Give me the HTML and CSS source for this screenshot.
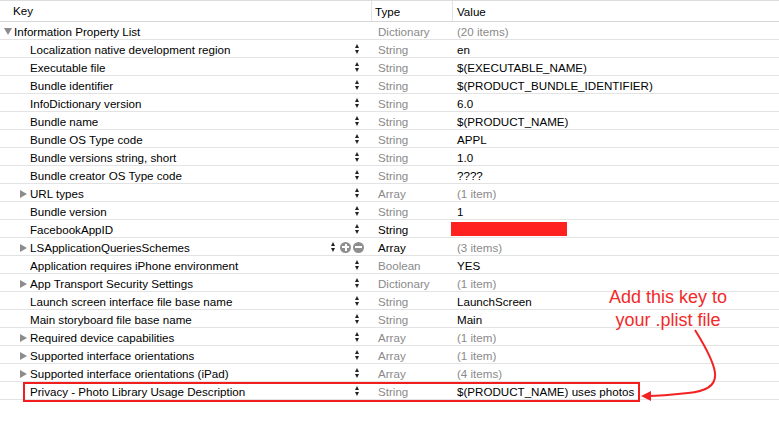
FILE: index.html
```html
<!DOCTYPE html>
<html>
<head>
<meta charset="utf-8">
<link rel="stylesheet" href="styles.css">
</head>
<body>
<div class="plist">
  <div class="row head">
    <div class="key"><span class="ktext">Key</span></div>
    <div class="type">Type</div>
    <div class="value">Value</div>
  </div>
  <div class="row">
    <div class="key root"><span class="tri down"></span><span class="ktext">Information Property List</span></div>
    <div class="type dim">Dictionary</div>
    <div class="value dim">(20 items)</div>
  </div>
  <div class="row">
    <div class="key child"><span class="ktext">Localization native development region</span><span class="step"></span></div>
    <div class="type dim">String</div><div class="value">en</div>
  </div>
  <div class="row">
    <div class="key child"><span class="ktext">Executable file</span><span class="step"></span></div>
    <div class="type dim">String</div><div class="value">$(EXECUTABLE_NAME)</div>
  </div>
  <div class="row">
    <div class="key child"><span class="ktext">Bundle identifier</span><span class="step"></span></div>
    <div class="type dim">String</div><div class="value">$(PRODUCT_BUNDLE_IDENTIFIER)</div>
  </div>
  <div class="row">
    <div class="key child"><span class="ktext">InfoDictionary version</span><span class="step"></span></div>
    <div class="type dim">String</div><div class="value">6.0</div>
  </div>
  <div class="row">
    <div class="key child"><span class="ktext">Bundle name</span><span class="step"></span></div>
    <div class="type dim">String</div><div class="value">$(PRODUCT_NAME)</div>
  </div>
  <div class="row">
    <div class="key child"><span class="ktext">Bundle OS Type code</span><span class="step"></span></div>
    <div class="type dim">String</div><div class="value">APPL</div>
  </div>
  <div class="row">
    <div class="key child"><span class="ktext">Bundle versions string, short</span><span class="step"></span></div>
    <div class="type dim">String</div><div class="value">1.0</div>
  </div>
  <div class="row">
    <div class="key child"><span class="ktext">Bundle creator OS Type code</span><span class="step"></span></div>
    <div class="type dim">String</div><div class="value">????</div>
  </div>
  <div class="row">
    <div class="key child"><span class="tri right"></span><span class="ktext">URL types</span><span class="step"></span></div>
    <div class="type dim">Array</div><div class="value dim">(1 item)</div>
  </div>
  <div class="row">
    <div class="key child"><span class="ktext">Bundle version</span><span class="step"></span></div>
    <div class="type dim">String</div><div class="value">1</div>
  </div>
  <div class="row">
    <div class="key child"><span class="ktext">FacebookAppID</span><span class="step"></span></div>
    <div class="type">String</div><div class="value"><span class="redact"></span></div>
  </div>
  <div class="row">
    <div class="key child"><span class="tri right"></span><span class="ktext">LSApplicationQueriesSchemes</span><span class="step alt"></span><span class="btn plus"></span><span class="btn minus"></span></div>
    <div class="type">Array</div><div class="value dim">(3 items)</div>
  </div>
  <div class="row">
    <div class="key child"><span class="ktext">Application requires iPhone environment</span><span class="step"></span></div>
    <div class="type dim">Boolean</div><div class="value">YES</div>
  </div>
  <div class="row">
    <div class="key child"><span class="tri right"></span><span class="ktext">App Transport Security Settings</span><span class="step"></span></div>
    <div class="type dim">Dictionary</div><div class="value dim">(1 item)</div>
  </div>
  <div class="row">
    <div class="key child"><span class="ktext">Launch screen interface file base name</span><span class="step"></span></div>
    <div class="type dim">String</div><div class="value">LaunchScreen</div>
  </div>
  <div class="row">
    <div class="key child"><span class="ktext">Main storyboard file base name</span><span class="step"></span></div>
    <div class="type dim">String</div><div class="value">Main</div>
  </div>
  <div class="row">
    <div class="key child"><span class="tri right"></span><span class="ktext">Required device capabilities</span><span class="step"></span></div>
    <div class="type dim">Array</div><div class="value dim">(1 item)</div>
  </div>
  <div class="row">
    <div class="key child"><span class="tri right"></span><span class="ktext">Supported interface orientations</span><span class="step"></span></div>
    <div class="type dim">Array</div><div class="value dim">(1 item)</div>
  </div>
  <div class="row">
    <div class="key child"><span class="tri right"></span><span class="ktext">Supported interface orientations (iPad)</span><span class="step"></span></div>
    <div class="type dim">Array</div><div class="value dim">(4 items)</div>
  </div>
  <div class="row">
    <div class="key child"><span class="ktext">Privacy - Photo Library Usage Description</span><span class="step"></span></div>
    <div class="type dim">String</div><div class="value">$(PRODUCT_NAME) uses photos</div>
  </div>

  <div class="highlight"></div>
  <div class="note">Add this key to<br>your .plist file</div>
  <svg class="arrow" width="120" height="80" viewBox="0 0 120 80">
    <path d="M 55 0 C 80 40, 86 60, 48 63 C 30 65, 14 66, 8 66" fill="none" stroke="#f22222" stroke-width="2"/>
    <path d="M 1 66 L 11 61 L 11 71 Z" fill="#f22222"/>
  </svg>
</div>
</body>
</html>
```
FILE: styles.css
```css
html, body {
  margin: 0;
  padding: 0;
  background: #fff;
}
.plist {
  position: relative;
  width: 779px;
  height: 423px;
  font-family: "Liberation Sans", Arial, sans-serif;
  font-size: 11.6px;
  color: #000;
  border-top: 1px solid #dcdcdc;
  box-sizing: border-box;
}
.row {
  display: grid;
  grid-template-columns: 372px 81px 1fr;
  height: 18px;
  padding-top: 2px;
  border-bottom: 1px solid #e3e3e3;
  box-sizing: border-box;
  align-items: center;
  line-height: 15px;
}
.row.head {
  height: 21px;
  padding-top: 0;
  border-bottom: 1px solid #d6d6d6;
  line-height: 22px;
}
.head .key, .head .type, .head .value {
  height: 20px;
  border-right: 1px solid #e3e3e3;
}
.head .value { border-right: none; }
.head .key .ktext { padding-left: 13px; }
.head .type { padding-left: 3px; }
.head .value { padding-left: 4px; }
.key {
  display: flex;
  align-items: center;
  position: relative;
  height: 15px;
  white-space: nowrap;
}
.key.root { padding-left: 4px; }
.key.root .ktext { padding-left: 1px; }
.key.child { padding-left: 30px; }
.key.child .tri { margin-left: -10px; margin-right: 3px; }
.tri {
  width: 0;
  height: 0;
  display: inline-block;
}
.tri.right {
  border-top: 4.5px solid transparent;
  border-bottom: 4.5px solid transparent;
  border-left: 7px solid #8c8c8c;
}
.tri.down {
  border-left: 4.5px solid transparent;
  border-right: 4.5px solid transparent;
  border-top: 7px solid #8c8c8c;
  margin-right: 1px;
}
.step {
  position: absolute;
  left: 355px;
  top: 2px;
  width: 5px;
  height: 10px;
}
.step.alt { left: 331px; }
.step::before, .step::after {
  content: "";
  position: absolute;
  left: 0;
  border-left: 2.5px solid transparent;
  border-right: 2.5px solid transparent;
}
.step::before { top: 0; border-bottom: 4px solid #222; }
.step::after { top: 6px; border-top: 4px solid #222; }
.btn {
  position: absolute;
  top: 1.5px;
  width: 11px;
  height: 11px;
  border-radius: 50%;
  background: #8e8e8e;
}
.btn::before, .btn::after {
  content: "";
  position: absolute;
  background: #fff;
}
.btn::before { left: 2px; top: 4.5px; width: 7px; height: 2px; }
.btn.plus::after { left: 4.5px; top: 2px; width: 2px; height: 7px; }
.btn.plus { left: 340px; }
.btn.minus { left: 353px; }
.type { padding-left: 6px; }
.value { padding-left: 4px; }
.dim { color: #8a8a8a; }
.redact {
  display: block;
  margin-left: -6px;
  margin-top: -1px;
  width: 116px;
  height: 14px;
  background: #ff2020;
}
.highlight {
  position: absolute;
  left: 23px;
  top: 381px;
  width: 617px;
  height: 20px;
  border: 2px solid #f21d1d;
  box-sizing: border-box;
}
.note {
  position: absolute;
  left: 588px;
  top: 285px;
  width: 160px;
  text-align: center;
  color: #f22a2a;
  font-size: 18px;
  line-height: 23px;
}
.arrow {
  position: absolute;
  left: 640px;
  top: 329px;
  overflow: visible;
}
```
